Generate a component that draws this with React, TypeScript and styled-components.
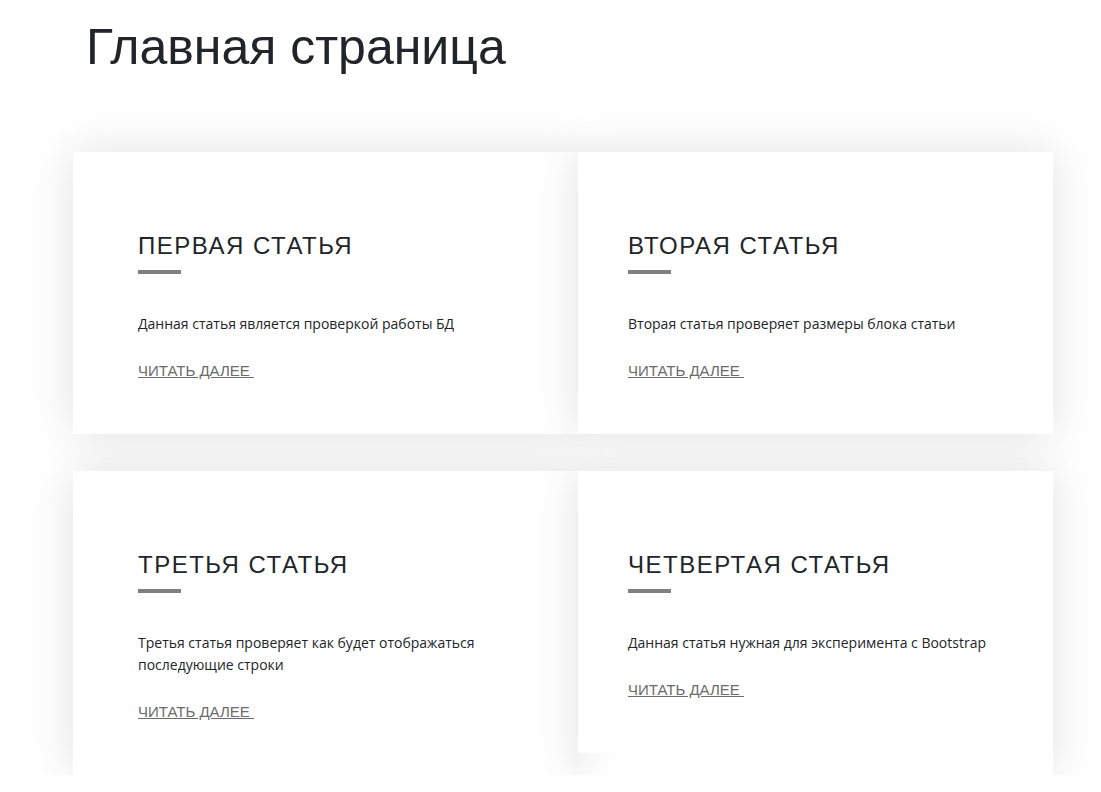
import React from "react";
import styled, { createGlobalStyle } from "styled-components";

type Article = {
  title: string;
  text: string;
};

const articles: Article[] = [
  { title: "Первая статья", text: "Данная статья является проверкой работы БД" },
  { title: "Вторая статья", text: "Вторая статья проверяет размеры блока статьи" },
  {
    title: "Третья статья",
    text: "Третья статья проверяет как будет отображаться последующие строки",
  },
  { title: "Четвертая статья", text: "Данная статья нужная для эксперимента с Bootstrap" },
];

const App = () => {
  return (
    <Page>
      <GlobalStyle />
      <Heading>Главная страница</Heading>
      <Grid>
        {articles.map((a, i) => (
          <Column key={a.title}>
            <Card $right={i % 2 === 1}>
              <Title>{a.title}</Title>
              <Bar />
              <Text>{a.text}</Text>
              <More href="#">Читать далее </More>
            </Card>
          </Column>
        ))}
      </Grid>
    </Page>
  );
};

export default App;

const GlobalStyle = createGlobalStyle`
  body {
    margin: 0;
    background: #fff;
    font-family: "Liberation Sans", Arial, sans-serif;
    color: #212529;
  }
`;

const Page = styled.div`
  padding: 18px 0 0 73px;
  width: 980px;
`;

const Heading = styled.h1`
  margin: 0 0 75px 13px;
  font-family: "Liberation Sans", Arial, sans-serif;
  font-size: 50px;
  line-height: 59px;
  font-weight: 400;
  color: #212529;
`;

const Grid = styled.div`
  display: grid;
  grid-template-columns: 505px 475px;
  row-gap: 37px;
`;

const Column = styled.div`
  box-shadow: 0 0 45px rgba(0, 0, 0, 0.12);
`;

const Card = styled.div<{ $right: boolean }>`
  background: #fff;
  padding: 79px ${(p) => (p.$right ? "50px" : "65px")} 52px
    ${(p) => (p.$right ? "50px" : "65px")};
`;

const Title = styled.h2`
  margin: 0;
  font-family: "Liberation Sans", Arial, sans-serif;
  font-size: 24px;
  line-height: 30px;
  font-weight: 400;
  letter-spacing: 1.5px;
  text-transform: uppercase;
  color: #212529;
`;

const Bar = styled.div`
  width: 43px;
  height: 4px;
  margin-top: 9px;
  background: #808080;
`;

const Text = styled.p`
  margin: 39px 0 0;
  font-family: "Open Sans", "Noto Sans", sans-serif;
  font-size: 14px;
  line-height: 22px;
  color: #212529;
`;

const More = styled.a`
  display: inline-block;
  margin-top: 25px;
  font-family: "Liberation Sans", Arial, sans-serif;
  font-size: 15px;
  line-height: 22px;
  color: #6c6c6c;
  text-decoration: underline;
  text-transform: uppercase;
  white-space: pre;
`;
